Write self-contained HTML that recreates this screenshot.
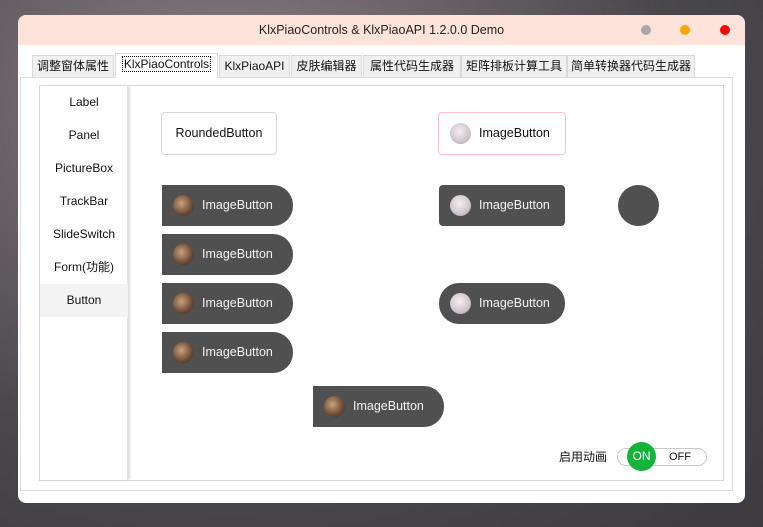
<!DOCTYPE html><html><head><meta charset="utf-8"><style>
*{margin:0;padding:0;box-sizing:border-box}
body{width:763px;height:527px;overflow:hidden;position:relative;background:radial-gradient(ellipse at 30% 20%,#8a7f84,#4a474c 60%,#3d3b40);font-family:"Microsoft YaHei","Liberation Sans","Noto Sans CJK SC",sans-serif;font-size:12px;color:#111}
.a{position:absolute}
.win{left:18px;top:15px;width:727px;height:488px;background:#fff;border-radius:8px;overflow:hidden}
.title{left:0;top:0;width:727px;height:30px;background:#fde3da;text-align:center;line-height:30px;font-size:12.5px;color:#222}
.dot{width:10px;height:10px;border-radius:50%;top:10px}
.tab{top:40px;height:22px;background:#f0f0f0;border:1px solid #d9d9d9;border-bottom:none;line-height:21px;text-align:center;font-size:12px}
.page{left:2px;top:62px;width:713px;height:414px;border:1px solid #dcdcdc;background:#fff}
.inner{left:21px;top:70px;width:685px;height:396px;border:1px solid #d6d6d6}
.side{left:22px;top:71px;width:88px;height:394px;background:#fff;box-shadow:2px 0 2px #ddd;border-right:1px solid #e6e6e6}
.it{left:22px;width:88px;height:33px;line-height:33px;text-align:center;font-size:12px}
.b{height:41px;background:#505050;color:#f2f2f2;font-size:12.5px;line-height:41px;padding-left:40px;border-radius:0 20px 20px 0}
.av{position:absolute;left:11px;top:10px;width:21px;height:21px;border-radius:50%;background:radial-gradient(circle at 40% 40%,#c9a27c,#6b4a35 60%,#3a2a22)}
.av2{background:radial-gradient(circle at 45% 40%,#f4eef0,#cfc5cc 60%,#9c919a)}
</style></head><body>
<div class="a win">
<div class="a title">KlxPiaoControls &amp; KlxPiaoAPI 1.2.0.0 Demo</div>
<div class="a dot" style="left:623px;background:#a8a8a8"></div>
<div class="a dot" style="left:662px;background:#ffa500"></div>
<div class="a dot" style="left:702px;background:#f00"></div>
<div class="a page"></div>
<div class="a tab" style="left:14px;width:82px">调整窗体属性</div>
<div class="a tab" style="left:97px;top:38px;height:25px;width:103px;background:#fff;z-index:2"><span style="border:1px dotted #000;padding:0 1px">KlxPiaoControls</span></div>
<div class="a tab" style="left:201px;width:71px">KlxPiaoAPI</div>
<div class="a tab" style="left:273px;width:71px">皮肤编辑器</div>
<div class="a tab" style="left:345px;width:98px">属性代码生成器</div>
<div class="a tab" style="left:443px;width:106px">矩阵排板计算工具</div>
<div class="a tab" style="left:549px;width:128px">简单转换器代码生成器</div>
<div class="a inner"></div>
<div class="a side"></div>
<div class="a it" style="top:71px">Label</div>
<div class="a it" style="top:104px">Panel</div>
<div class="a it" style="top:137px">PictureBox</div>
<div class="a it" style="top:170px">TrackBar</div>
<div class="a it" style="top:203px">SlideSwitch</div>
<div class="a it" style="top:236px">Form(功能)</div>
<div class="a it" style="top:269px;background:#f3f3f3">Button</div>
<div class="a" style="left:143px;top:97px;width:116px;height:43px;border:1px solid #d8d8d8;border-radius:4px;text-align:center;line-height:41px;font-size:12.5px">RoundedButton</div>
<div class="a" style="left:420px;top:97px;width:128px;height:43px;border:1px solid #ffc0cb;border-radius:4px;line-height:41px;font-size:12.5px;padding-left:40px"><span class="av av2"></span>ImageButton</div>
<div class="a b" style="left:144px;top:170px;width:131px"><span class="av"></span>ImageButton</div>
<div class="a b" style="left:144px;top:219px;width:131px"><span class="av"></span>ImageButton</div>
<div class="a b" style="left:144px;top:268px;width:131px"><span class="av"></span>ImageButton</div>
<div class="a b" style="left:144px;top:317px;width:131px"><span class="av"></span>ImageButton</div>
<div class="a b" style="left:295px;top:371px;width:131px"><span class="av"></span>ImageButton</div>
<div class="a b" style="left:421px;top:170px;width:126px;border-radius:4px"><span class="av av2"></span>ImageButton</div>
<div class="a b" style="left:421px;top:268px;width:126px;border-radius:20px"><span class="av av2"></span>ImageButton</div>
<div class="a" style="left:600px;top:170px;width:41px;height:41px;border-radius:50%;background:#505050"></div>
<div class="a" style="left:541px;top:433px;font-size:12px">启用动画</div>
<div class="a" style="left:599px;top:433px;width:90px;height:18px;border:1px solid #c8c8c8;border-radius:9px;background:#fff;font-size:11px;line-height:16px;padding-left:51px">OFF</div>
<div class="a" style="left:609px;top:427px;width:29px;height:29px;border-radius:50%;background:#14b33a;color:#fff;text-align:center;line-height:29px;font-size:12px">ON</div>
</div>
</body></html>
